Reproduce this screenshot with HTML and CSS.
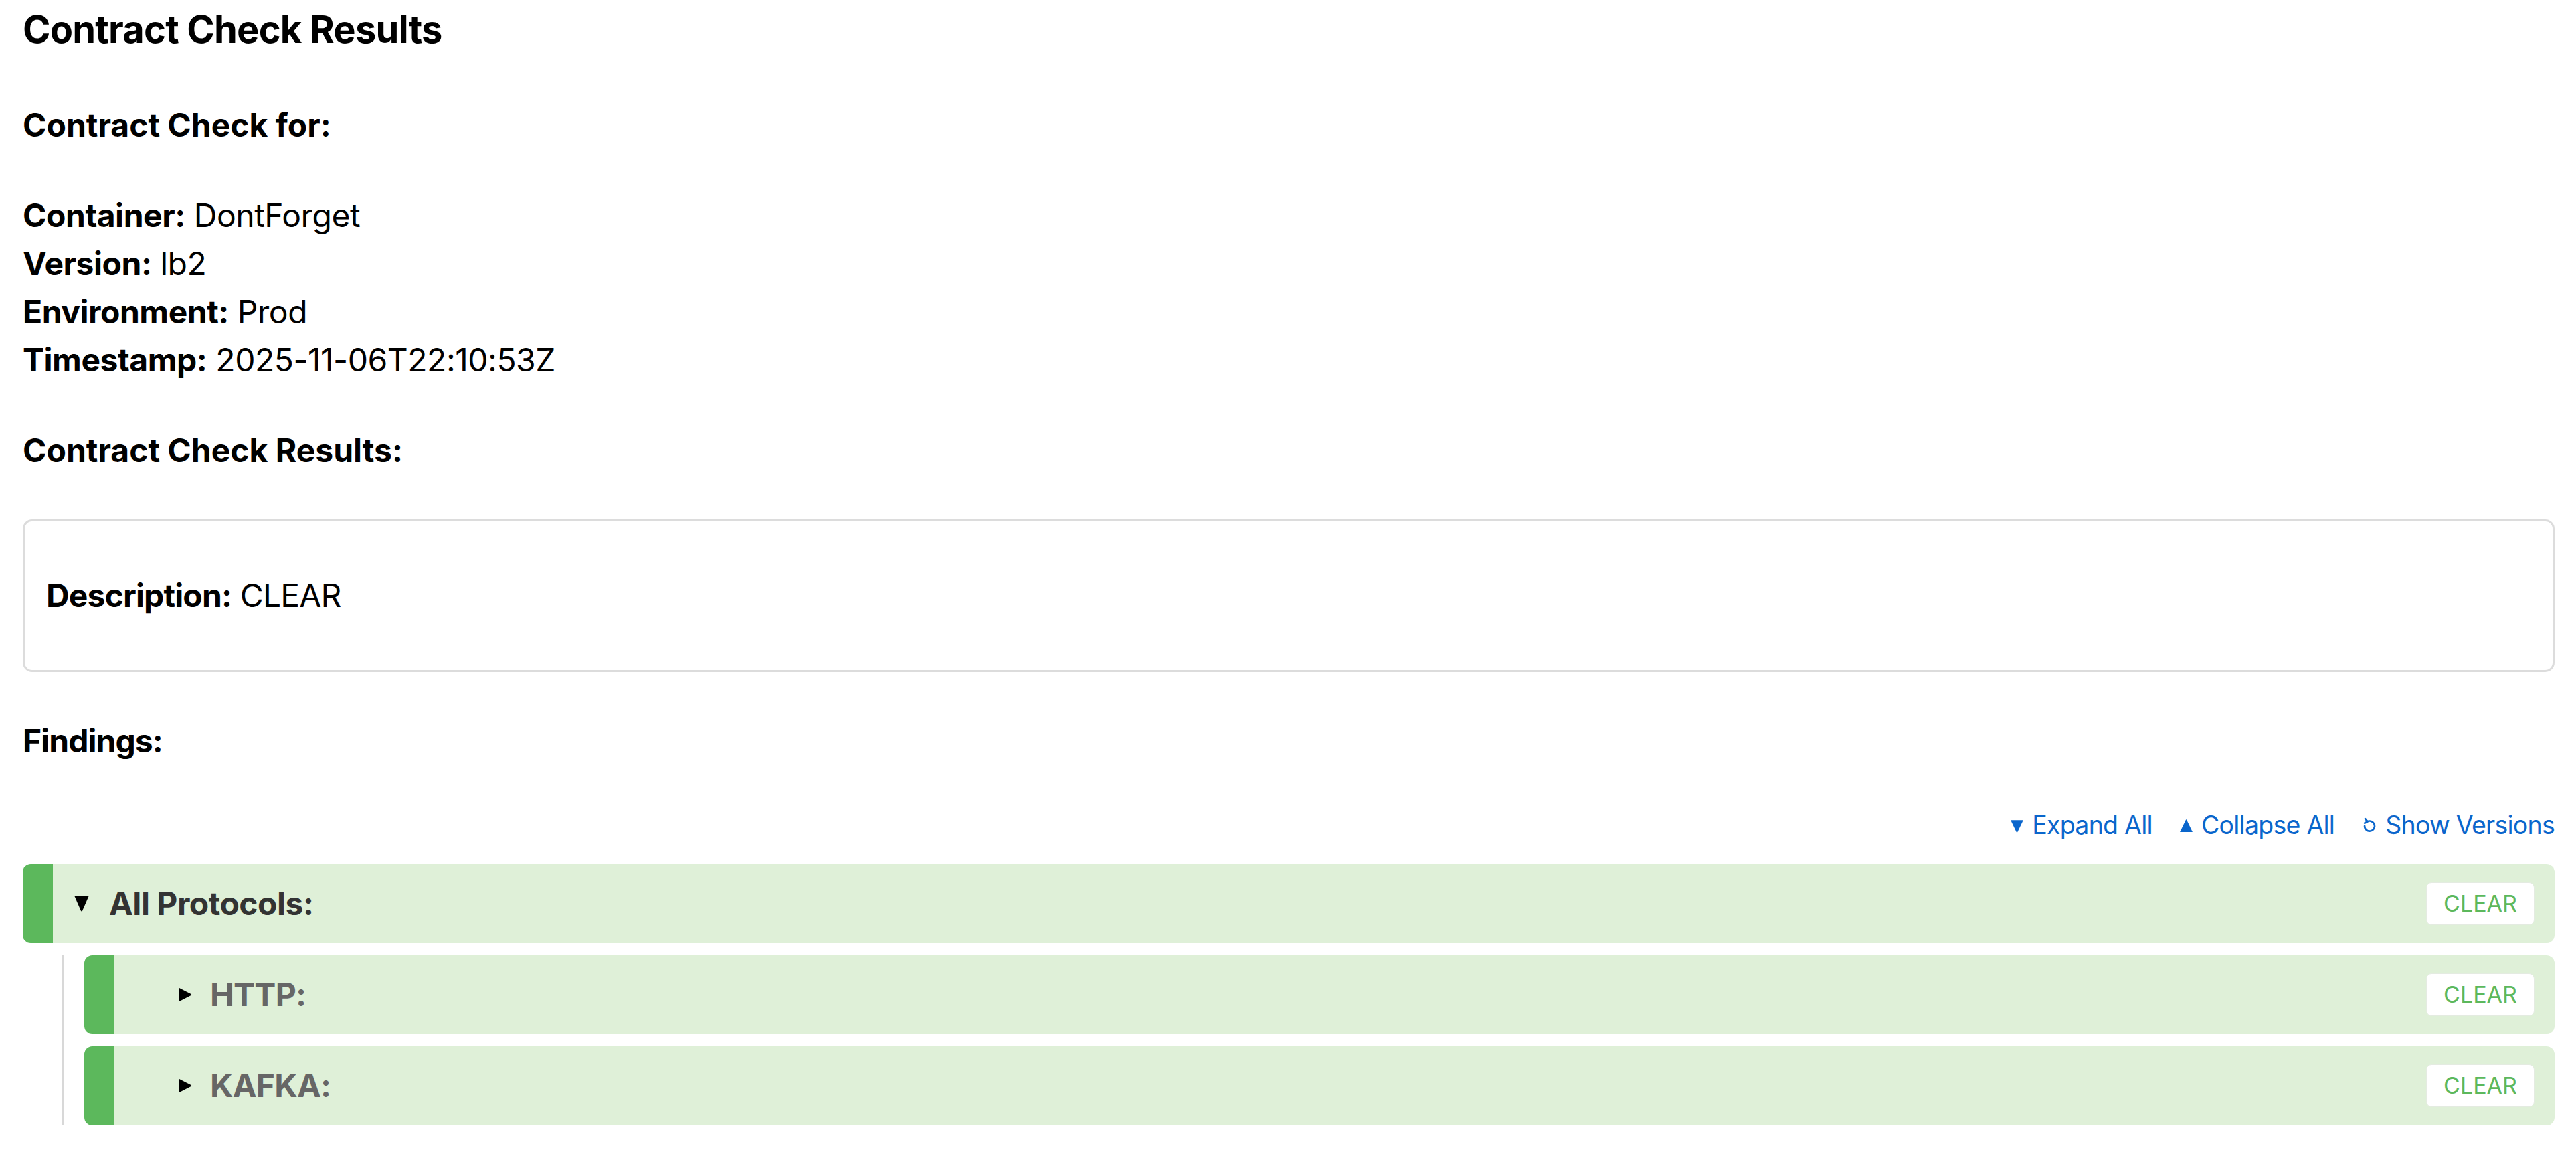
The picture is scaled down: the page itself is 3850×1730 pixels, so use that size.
FILE: index.html
```html
<!DOCTYPE html>
<html lang="en">
<head>
<meta charset="utf-8">
<title>Contract Check Results</title>
<link rel="stylesheet" href="styles.css">
</head>
<body>
<main class="page">
  <h1 class="title">Contract Check Results</h1>

  <p class="label label-for">Contract Check for:</p>

  <div class="meta">
    <div class="meta-row"><b>Container:</b> DontForget</div>
    <div class="meta-row"><b>Version:</b> lb2</div>
    <div class="meta-row"><b>Environment:</b> Prod</div>
    <div class="meta-row"><b>Timestamp:</b> 2025-11-06T22:10:53Z</div>
  </div>

  <p class="label label-results">Contract Check Results:</p>

  <div class="desc-box"><b>Description:</b>&nbsp;CLEAR</div>

  <p class="label label-findings">Findings:</p>

  <div class="toolbar">
    <a class="tool" href="#">
      <svg class="tool-icon tri-icon" viewBox="0 0 20 22" aria-hidden="true"><path d="M1 3 L19 3 L10.8 20 Q10 21.5 9.2 20 Z" fill="currentColor"/></svg>
      <span>Expand All</span>
    </a>
    <a class="tool" href="#">
      <svg class="tool-icon tri-icon" viewBox="0 0 20 22" aria-hidden="true"><path d="M1 20 L19 20 L10.8 3 Q10 1.5 9.2 3 Z" fill="currentColor"/></svg>
      <span>Collapse All</span>
    </a>
    <a class="tool" href="#">
      <svg class="tool-icon loop-icon" viewBox="0 0 16 18" aria-hidden="true"><path d="M6.2 5.2 A5 5 0 1 1 3.4 9.6" fill="none" stroke="currentColor" stroke-width="1.8" stroke-linecap="round"/><path d="M4 2.4 L6.4 5.2 L3.4 6.8" fill="none" stroke="currentColor" stroke-width="1.8" stroke-linecap="round" stroke-linejoin="round"/></svg>
      <span>Show Versions</span>
    </a>
  </div>

  <div class="tree">
    <div class="node-head root-head">
      <svg class="caret caret-down" viewBox="0 0 22 24" aria-hidden="true"><path d="M0.5 1 L21.5 1 L12.2 22.5 Q11 24.5 9.8 22.5 Z" fill="#000"/></svg>
      <span class="node-name">All Protocols:</span>
      <span class="badge">CLEAR</span>
    </div>
    <div class="children">
      <div class="node-head child-head">
        <svg class="caret caret-right" viewBox="0 0 22 24" aria-hidden="true"><path d="M2 1.5 L20.5 11 Q21.8 12 20.5 13 L2 22.5 Z" fill="#000"/></svg>
        <span class="node-name">HTTP:</span>
        <span class="badge">CLEAR</span>
      </div>
      <div class="node-head child-head">
        <svg class="caret caret-right" viewBox="0 0 22 24" aria-hidden="true"><path d="M2 1.5 L20.5 11 Q21.8 12 20.5 13 L2 22.5 Z" fill="#000"/></svg>
        <span class="node-name">KAFKA:</span>
        <span class="badge">CLEAR</span>
      </div>
    </div>
  </div>
</main>
</body>
</html>
```

FILE: styles.css
```css
* { box-sizing: border-box; }

html, body {
  margin: 0;
  padding: 0;
  background: #ffffff;
}

body {
  font-family: "Inter", "Liberation Sans", Arial, sans-serif;
  color: #000;
  font-size: 48px;
  line-height: 72px;
  letter-spacing: -0.01em;
}

.page {
  padding: 2px 32px 40px 34px;
}

.title {
  margin: 0;
  font-size: 56px;
  line-height: 84px;
  font-weight: 700;
  letter-spacing: -0.014em;
}

.label {
  margin: 0;
  font-weight: 700;
  letter-spacing: 0;
}

.label-for { margin-top: 65px; }

.meta { margin-top: 63px; }

.meta-row b { font-weight: 700; }

.label-results { margin-top: 63px; }

.desc-box {
  margin-top: 67px;
  height: 228px;
  border: 3px solid #dcdcdc;
  border-radius: 14px;
  padding: 0 32px;
  display: flex;
  align-items: center;
  letter-spacing: -0.018em;
}

.label-findings {
  margin-top: 67px;
  letter-spacing: -0.02em;
}

.toolbar {
  margin-top: 62px;
  display: flex;
  justify-content: flex-end;
  gap: 40px;
  font-size: 37.5px;
  line-height: 56px;
  letter-spacing: -0.02em;
}

.tool {
  display: flex;
  align-items: center;
  gap: 12px;
  color: #0a66cc;
  text-decoration: none;
}

.tool-icon { display: block; }
.tri-icon { width: 21px; height: 23px; }
.loop-icon { width: 24px; height: 28px; }

.tree { margin-top: 30px; }

.node-head {
  height: 118px;
  display: flex;
  align-items: center;
  background: #dff0d8;
  border-left: 45px solid #5cb85c;
  border-radius: 12px;
  padding-right: 30px;
  font-weight: 700;
  letter-spacing: -0.01em;
}

.root-head {
  padding-left: 32px;
  color: #333333;
}

.child-head {
  padding-left: 94px;
  color: #666666;
  letter-spacing: -0.016em;
}

.caret { display: block; flex: none; }
.caret-down { width: 22px; height: 24px; margin-right: 30px; }
.caret-right { width: 22px; height: 24px; margin-right: 27px; }

.node-name { flex: 1; }

.badge {
  width: 162px;
  height: 64px;
  display: flex;
  align-items: center;
  justify-content: center;
  background: #ffffff;
  border: 1px solid #e4ebe1;
  border-radius: 8px;
  color: #5cb85c;
  font-weight: 400;
  font-size: 34px;
  letter-spacing: 0;
}

.children {
  margin-top: 18px;
  margin-left: 59px;
  border-left: 3px solid #d8d8d8;
  padding-left: 30px;
  display: flex;
  flex-direction: column;
  gap: 18px;
}
```
